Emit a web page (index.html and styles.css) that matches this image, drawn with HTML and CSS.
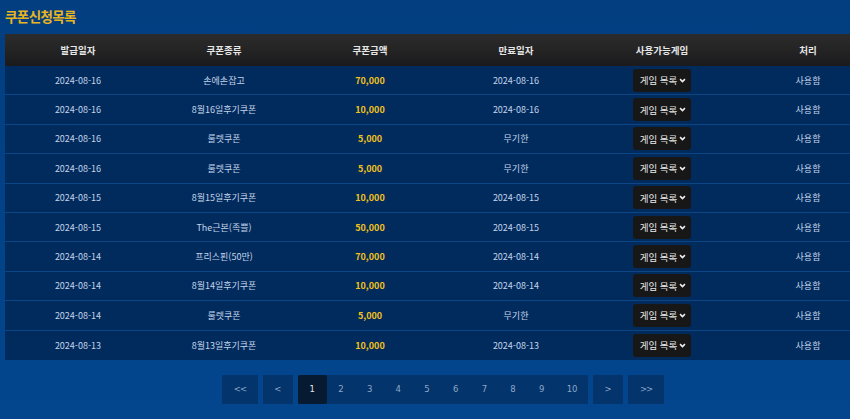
FILE: index.html
```html
<!DOCTYPE html>
<html lang="ko">
<head>
<meta charset="utf-8">
<title>쿠폰신청목록</title>
<link rel="stylesheet" href="styles.css">
</head>
<body>
<div class="page">
  <h2 class="title">쿠폰신청목록</h2>
  <table class="list">
    <thead>
      <tr><th>발급일자</th><th>쿠폰종류</th><th>쿠폰금액</th><th>만료일자</th><th>사용가능게임</th><th>처리</th></tr>
    </thead>
    <tbody>
      <tr><td>2024-08-16</td><td>손에손잡고</td><td class="amt">70,000</td><td>2024-08-16</td><td><span class="sel">게임 목록<svg viewBox="0 0 10 10" class="chev"><path d="M1.5 3 L5 6.5 L8.5 3"/></svg></span></td><td>사용함</td></tr>
      <tr><td>2024-08-16</td><td>8월16일후기쿠폰</td><td class="amt">10,000</td><td>2024-08-16</td><td><span class="sel">게임 목록<svg viewBox="0 0 10 10" class="chev"><path d="M1.5 3 L5 6.5 L8.5 3"/></svg></span></td><td>사용함</td></tr>
      <tr><td>2024-08-16</td><td>룰렛쿠폰</td><td class="amt">5,000</td><td>무기한</td><td><span class="sel">게임 목록<svg viewBox="0 0 10 10" class="chev"><path d="M1.5 3 L5 6.5 L8.5 3"/></svg></span></td><td>사용함</td></tr>
      <tr><td>2024-08-16</td><td>룰렛쿠폰</td><td class="amt">5,000</td><td>무기한</td><td><span class="sel">게임 목록<svg viewBox="0 0 10 10" class="chev"><path d="M1.5 3 L5 6.5 L8.5 3"/></svg></span></td><td>사용함</td></tr>
      <tr><td>2024-08-15</td><td>8월15일후기쿠폰</td><td class="amt">10,000</td><td>2024-08-15</td><td><span class="sel">게임 목록<svg viewBox="0 0 10 10" class="chev"><path d="M1.5 3 L5 6.5 L8.5 3"/></svg></span></td><td>사용함</td></tr>
      <tr><td>2024-08-15</td><td>The근본(족쁠)</td><td class="amt">50,000</td><td>2024-08-15</td><td><span class="sel">게임 목록<svg viewBox="0 0 10 10" class="chev"><path d="M1.5 3 L5 6.5 L8.5 3"/></svg></span></td><td>사용함</td></tr>
      <tr><td>2024-08-14</td><td>프리스핀(50만)</td><td class="amt">70,000</td><td>2024-08-14</td><td><span class="sel">게임 목록<svg viewBox="0 0 10 10" class="chev"><path d="M1.5 3 L5 6.5 L8.5 3"/></svg></span></td><td>사용함</td></tr>
      <tr><td>2024-08-14</td><td>8월14일후기쿠폰</td><td class="amt">10,000</td><td>2024-08-14</td><td><span class="sel">게임 목록<svg viewBox="0 0 10 10" class="chev"><path d="M1.5 3 L5 6.5 L8.5 3"/></svg></span></td><td>사용함</td></tr>
      <tr><td>2024-08-14</td><td>룰렛쿠폰</td><td class="amt">5,000</td><td>무기한</td><td><span class="sel">게임 목록<svg viewBox="0 0 10 10" class="chev"><path d="M1.5 3 L5 6.5 L8.5 3"/></svg></span></td><td>사용함</td></tr>
      <tr><td>2024-08-13</td><td>8월13일후기쿠폰</td><td class="amt">10,000</td><td>2024-08-13</td><td><span class="sel">게임 목록<svg viewBox="0 0 10 10" class="chev"><path d="M1.5 3 L5 6.5 L8.5 3"/></svg></span></td><td>사용함</td></tr>
    </tbody>
  </table>
  <nav class="pager">
    <a class="btn first">&lt;&lt;</a>
    <a class="btn prev">&lt;</a>
    <div class="nums">
      <a class="num active">1</a><a class="num">2</a><a class="num">3</a><a class="num">4</a><a class="num">5</a><a class="num">6</a><a class="num">7</a><a class="num">8</a><a class="num">9</a><a class="num ten">10</a>
    </div>
    <a class="btn next">&gt;</a>
    <a class="btn last">&gt;&gt;</a>
  </nav>
</div>
</body>
</html>
```

FILE: styles.css
```css
html, body {
  margin: 0;
  padding: 0;
  overflow: hidden;
}
body {
  background: linear-gradient(#023e80, #03468e);
  height: 419px;
  font-family: "Noto Sans CJK KR", "Noto Sans", sans-serif;
}
.page {
  width: 876px;
  padding-left: 5px;
}
.title {
  margin: 0 0 8px 0;
  padding-top: 6px;
  font-size: 13.5px;
  line-height: 20px;
  font-weight: 700;
  color: #e9b51f;
  letter-spacing: -0.6px;
}
.list {
  width: 876px;
  border-collapse: collapse;
  table-layout: fixed;
}
.list th {
  height: 32px;
  padding: 0;
  background: linear-gradient(#2c2c2c, #1b1b1d);
  color: #e6e6e6;
  font-size: 9.5px;
  font-weight: 700;
  text-align: center;
}
.list td {
  height: 28.4px;
  padding: 0;
  background: #022b5d;
  border-bottom: 1px solid #0a4585;
  color: #c2d4ea;
  font-size: 9px;
  text-align: center;
}
.list tbody tr:last-child td {
  border-bottom: none;
  height: 29.4px;
}
.list td.amt {
  color: #f2c21c;
  font-weight: 700;
}
.sel {
  display: inline-flex;
  align-items: center;
  justify-content: center;
  gap: 2px;
  width: 58px;
  height: 23px;
  box-sizing: border-box;
  padding-left: 2px;
  background: #171717;
  border-radius: 3px;
  color: #e8e8e8;
  font-size: 9.5px;
  vertical-align: middle;
}
.chev {
  width: 7px;
  height: 7px;
  fill: none;
  stroke: #f0f0f0;
  stroke-width: 2.2;
}
.pager {
  display: flex;
  justify-content: center;
  align-items: center;
  gap: 5px;
  margin-top: 15px;
}
.btn, .num {
  display: flex;
  align-items: center;
  justify-content: center;
  height: 29px;
  color: #8ea8c8;
  font-size: 8.5px;
  font-family: "DejaVu Sans", sans-serif;
}
.btn {
  background: #03346c;
}
.first, .last {
  width: 36px;
  letter-spacing: -1px;
}
.prev, .next {
  width: 30px;
}
.nums {
  display: flex;
  background: #03346c;
}
.num {
  width: 28.7px;
}
.num.ten {
  width: 32px;
}
.num.active {
  background: #061a32;
  color: #e6e6e6;
  border-radius: 2px;
}
```
